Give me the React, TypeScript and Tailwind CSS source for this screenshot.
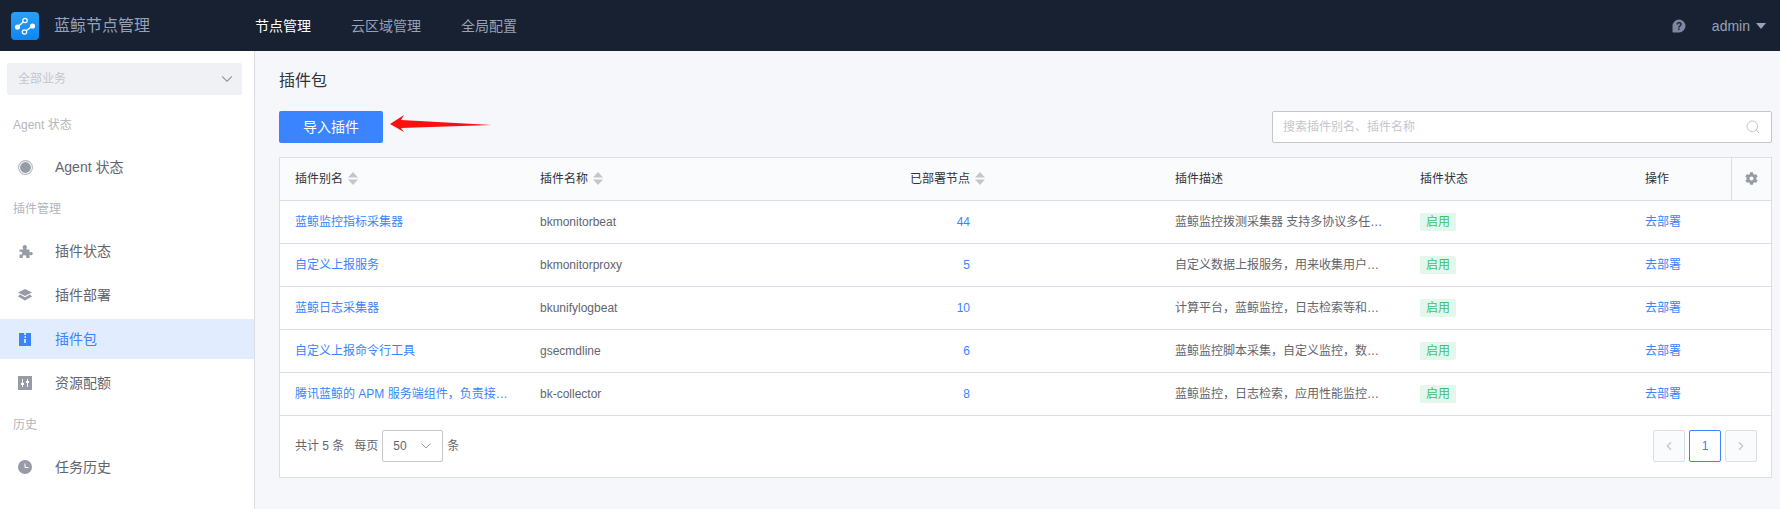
import React from "react";
import { FaCog } from "react-icons/fa";
import { ChevronDown, ChevronLeft, ChevronRight, Search } from "lucide-react";

const Logo = () => (
  <svg width="28" height="28" viewBox="0 0 28 28" className="shrink-0">
    <defs>
      <linearGradient id="lg" x1="0" y1="0" x2="0" y2="1">
        <stop offset="0" stopColor="#2aa0f5" />
        <stop offset="1" stopColor="#0f86f0" />
      </linearGradient>
    </defs>
    <rect width="28" height="28" rx="4" fill="url(#lg)" />
    <line x1="6.5" y1="15" x2="14" y2="8.5" stroke="#fff" strokeWidth="1.4" />
    <line x1="13.5" y1="20" x2="21.5" y2="14" stroke="#fff" strokeWidth="1.4" />
    <circle cx="6.5" cy="15" r="2.6" fill="#fff" />
    <circle cx="21.5" cy="14" r="2.6" fill="#fff" />
    <circle cx="14" cy="8.5" r="2.2" fill="#1b93f3" stroke="#fff" strokeWidth="1.2" />
    <circle cx="13.5" cy="20" r="2.2" fill="#1b93f3" stroke="#fff" strokeWidth="1.2" />
  </svg>
);

const Sort = () => (
  <svg width="10" height="13" viewBox="0 0 10 13" className="ml-[5px] shrink-0">
    <polygon points="5,0 10,5.5 0,5.5" fill="#c4c6cc" />
    <polygon points="5,13 10,7.5 0,7.5" fill="#c4c6cc" />
  </svg>
);

const AgentIcon = () => (
  <svg width="15" height="15" viewBox="0 0 15 15">
    <circle cx="7.5" cy="7.5" r="6.9" fill="none" stroke="#b5b8c0" strokeWidth="1.1" />
    <circle cx="7.5" cy="7.5" r="5.4" fill="#979ba5" />
  </svg>
);
const PuzzleIcon = () => (
  <svg width="15" height="15" viewBox="0 0 15 15">
    <path
      d="M1.5 5.5H5C5.4 5.5 5.3 4.8 4.9 4.2C4.2 3 5.1 1 6.8 1C8.5 1 9.3 3 8.7 4.2C8.4 4.8 8.3 5.5 8.8 5.5H11.5V8C11.5 8.5 12 8.5 12.4 8.2C13.3 7.5 14.8 8.1 14.8 9.6C14.8 11 13.3 11.6 12.4 11C12 10.7 11.5 10.8 11.5 11.2V14H8.5C8 14 8 13.5 8.2 13C8.6 12.2 8 11.3 6.5 11.3C5 11.3 4.4 12.2 4.8 13C5 13.5 5 14 4.5 14H1.5V10.8C1.5 10.4 2 10.4 2.4 10.6C3.3 11 4.3 10.2 4.3 9.2C4.3 8.2 3.3 7.4 2.4 7.8C2 8 1.5 8 1.5 7.5Z"
      fill="#979ba5"
    />
  </svg>
);
const LayersIcon = () => (
  <svg width="14" height="12" viewBox="0 0 14 12">
    <polygon points="7,0 14,3.6 7,7 0,3.6" fill="#979ba5" />
    <polygon points="2,5.6 7,8.2 12,5.6 14,7.6 7,11.6 0,7.6" fill="#979ba5" />
  </svg>
);
const ZipIcon = () => (
  <svg width="12" height="13" viewBox="0 0 12 13">
    <rect width="12" height="13" fill="#3a84ff" />
    <rect x="5" y="0" width="2" height="2" fill="#cfe0ff" />
    <rect x="5.5" y="3" width="1.5" height="2" fill="#cfe0ff" />
    <rect x="5" y="6" width="2" height="4" fill="#cfe0ff" />
  </svg>
);
const SlidersIcon = () => (
  <svg width="14" height="14" viewBox="0 0 14 14">
    <rect width="14" height="14" fill="#979ba5" />
    <line x1="4.5" y1="3" x2="4.5" y2="11" stroke="#fff" strokeWidth="1" />
    <line x1="9.5" y1="3" x2="9.5" y2="11" stroke="#fff" strokeWidth="1" />
    <rect x="3" y="7" width="3" height="2" fill="#fff" />
    <rect x="8" y="5" width="3" height="2" fill="#fff" />
  </svg>
);
const ClockIcon = () => (
  <svg width="14" height="14" viewBox="0 0 14 14">
    <circle cx="7" cy="7" r="7" fill="#979ba5" />
    <path d="M7 3.5V7.5H10.5" fill="none" stroke="#fff" strokeWidth="1" />
  </svg>
);
const HelpIcon = () => (
  <svg width="14" height="14" viewBox="0 0 14 14">
    <path d="M7 0.5a6.5 6.5 0 1 1 0 13H1.2c-.5 0-.7-.4-.7-.8V7A6.5 6.5 0 0 1 7 .5Z" fill="#7a88a3" />
    <text x="7" y="10.6" fontSize="10" fontWeight="700" textAnchor="middle" fill="#182132" fontFamily="Liberation Sans">?</text>
  </svg>
);

const SectionTitle = ({ children }: { children: React.ReactNode }) => (
  <div className="h-[44px] pl-[13px] pt-[13px] text-xs leading-[18px] text-[#b2b5bd]">{children}</div>
);

const NavItem = ({ icon, label, active }: { icon: React.ReactNode; label: string; active?: boolean }) => (
  <div className={`flex h-10 items-center text-sm ${active ? "bg-[#e1ecff] text-[#3a84ff]" : "text-[#63656e]"}`}>
    <span className="flex w-[55px] shrink-0 justify-center pr-[5px]">{icon}</span>
    {label}
  </div>
);

const rows = [
  ["蓝鲸监控指标采集器", "bkmonitorbeat", "44", "蓝鲸监控拨测采集器 支持多协议多任…"],
  ["自定义上报服务", "bkmonitorproxy", "5", "自定义数据上报服务，用来收集用户…"],
  ["蓝鲸日志采集器", "bkunifylogbeat", "10", "计算平台，蓝鲸监控，日志检索等和…"],
  ["自定义上报命令行工具", "gsecmdline", "6", "蓝鲸监控脚本采集，自定义监控，数…"],
  ["腾讯蓝鲸的 APM 服务端组件，负责接…", "bk-collector", "8", "蓝鲸监控，日志检索，应用性能监控…"],
];

export default function App() {
  return (
    <div className="flex h-[509px] w-full flex-col overflow-hidden bg-[#f5f7fb] font-['Liberation_Sans','Noto_Sans_CJK_SC',sans-serif] text-xs text-[#63656e]">
      <header className="flex h-[51px] shrink-0 items-center bg-[#182132] pl-[11px] pr-[14px]">
        <Logo />
        <div className="ml-[15px] w-[201px] text-base text-[#96a2b9]">蓝鲸节点管理</div>
        <nav className="flex gap-10 text-sm text-[#96a2b9]">
          <span className="text-white">节点管理</span>
          <span>云区域管理</span>
          <span>全局配置</span>
        </nav>
        <div className="ml-auto flex items-center text-sm text-[#96a2b9]">
          <HelpIcon />
          <span className="ml-[26px]">admin</span>
          <svg width="10" height="6" viewBox="0 0 10 6" className="ml-[6px]">
            <polygon points="0,0 10,0 5,6" fill="#96a2b9" />
          </svg>
        </div>
      </header>

      <div className="flex min-h-0 flex-1">
        <aside className="w-[255px] shrink-0 border-r border-[#dcdee5] bg-white pt-[12px]">
          <div className="mb-[8px] ml-[7px] mr-[12px] flex h-8 items-center justify-between rounded-[2px] bg-[#f0f1f5] pl-[11px] pr-[6px] text-[#c4c6cc]">
            全部业务
            <ChevronDown size={18} strokeWidth={1.5} className="text-[#979ba5]" />
          </div>
          <SectionTitle>Agent 状态</SectionTitle>
          <NavItem icon={<AgentIcon />} label="Agent 状态" />
          <SectionTitle>插件管理</SectionTitle>
          <div className="flex flex-col gap-1">
            <NavItem icon={<PuzzleIcon />} label="插件状态" />
            <NavItem icon={<LayersIcon />} label="插件部署" />
            <NavItem icon={<ZipIcon />} label="插件包" active />
            <NavItem icon={<SlidersIcon />} label="资源配额" />
          </div>
          <SectionTitle>历史</SectionTitle>
          <NavItem icon={<ClockIcon />} label="任务历史" />
        </aside>

        <main className="min-w-0 flex-1 pl-[24px] pr-[8px] pt-[18px]">
          <h1 className="h-[24px] text-base font-normal leading-[24px] text-[#313238]">插件包</h1>
          <div className="relative mt-[18px] flex h-8 items-center justify-between">
            <button className="h-8 w-[104px] rounded-[2px] bg-[#3a84ff] text-sm text-white">导入插件</button>
            <svg width="103" height="20" viewBox="0 0 103 20" className="absolute left-[111px] top-[3px]">
              <polygon points="0,10 14,1 11,6 102,11 11,14 14,18" fill="#fb1010" />
            </svg>
            <div className="flex h-8 w-[500px] items-center justify-between rounded-[2px] border border-[#c4c6cc] bg-white pl-[10px] pr-[10px] text-[#c4c6cc]">
              搜索插件别名、插件名称
              <Search size={16} strokeWidth={1.5} className="text-[#c4c6cc]" />
            </div>
          </div>

          <div className="mt-[14px] border border-[#dcdee5] bg-white">
            <table className="w-full table-fixed border-collapse text-xs">
              <colgroup>
                <col className="w-[245px]" />
                <col className="w-[245px]" />
                <col className="w-[390px]" />
                <col className="w-[245px]" />
                <col className="w-[225px]" />
                <col />
                <col className="w-[40px]" />
              </colgroup>
              <thead>
                <tr className="h-[42px] border-b border-[#dcdee5] bg-[#fafbfd] text-left text-[#313238]">
                  <th className="px-[15px] font-normal">
                    <span className="flex items-center">插件别名<Sort /></span>
                  </th>
                  <th className="px-[15px] font-normal">
                    <span className="flex items-center">插件名称<Sort /></span>
                  </th>
                  <th className="pr-[175px] font-normal">
                    <span className="flex items-center justify-end">已部署节点<Sort /></span>
                  </th>
                  <th className="px-[15px] font-normal">插件描述</th>
                  <th className="px-[15px] font-normal">插件状态</th>
                  <th className="px-[15px] font-normal">操作</th>
                  <th className="border-l border-[#dcdee5] font-normal">
                    <span className="flex justify-center"><FaCog size={13} color="#979ba5" /></span>
                  </th>
                </tr>
              </thead>
              <tbody>
                {rows.map((r) => (
                  <tr key={r[1]} className="h-[43px] border-b border-[#dcdee5]">
                    <td className="whitespace-nowrap px-[15px] text-[#3a84ff]">{r[0]}</td>
                    <td className="whitespace-nowrap px-[15px]">{r[1]}</td>
                    <td className="pr-[190px] text-right text-[#3a84ff]">{r[2]}</td>
                    <td className="whitespace-nowrap px-[15px]">{r[3]}</td>
                    <td className="px-[15px]">
                      <span className="inline-block h-[18px] rounded-[2px] bg-[#e4f7ec] px-[6px] align-middle leading-[18px] text-[#3fc06d]">启用</span>
                    </td>
                    <td className="px-[15px] text-[#3a84ff]">去部署</td>
                    <td />
                  </tr>
                ))}
              </tbody>
            </table>
            <div className="flex h-[61px] items-center justify-between pl-[15px] pr-[14px]">
              <div className="flex items-center">
                <span>共计 5 条</span>
                <span className="ml-[10px]">每页</span>
                <div className="ml-[4px] flex h-8 w-[61px] items-center justify-between rounded-[2px] border border-[#c4c6cc] pl-[10px] pr-[8px]">
                  50
                  <ChevronDown size={16} strokeWidth={1.5} className="text-[#979ba5]" />
                </div>
                <span className="ml-[4px]">条</span>
              </div>
              <div className="flex gap-1">
                <div className="flex h-8 w-8 items-center justify-center rounded-[2px] border border-[#dcdee5] bg-[#fafbfd] text-[#c4c6cc]">
                  <ChevronLeft size={14} />
                </div>
                <div className="flex h-8 w-8 items-center justify-center rounded-[2px] border border-[#3a84ff] text-[#3a84ff]">1</div>
                <div className="flex h-8 w-8 items-center justify-center rounded-[2px] border border-[#dcdee5] bg-[#fafbfd] text-[#c4c6cc]">
                  <ChevronRight size={14} />
                </div>
              </div>
            </div>
          </div>
        </main>
      </div>
    </div>
  );
}
